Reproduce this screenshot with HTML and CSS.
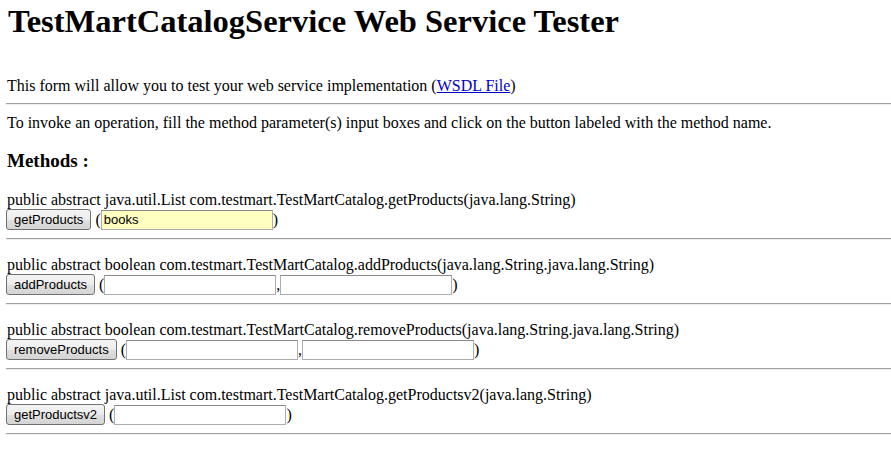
FILE: index.html
```html
<!DOCTYPE html>
<html>
<head>
<meta charset="utf-8">
<title>TestMartCatalogService Web Service Tester</title>
<link rel="stylesheet" href="styles.css">
</head>
<body>
<h1 class="title">TestMartCatalogService Web Service Tester</h1>
<p class="intro">This form will allow you to test your web service implementation (<a class="link" href="#">WSDL File</a>)</p>
<hr class="rule">
<p class="instructions">To invoke an operation, fill the method parameter(s) input boxes and click on the button labeled with the method name.</p>
<h2 class="methods-title">Methods :</h2>

<form class="method">
  <div class="sig">public abstract java.util.List com.testmart.TestMartCatalog.getProducts(java.lang.String)</div>
  <div class="call"><button type="button" class="btn">getProducts</button><span class="paren open">(</span><input class="field filled" type="text" value="books"><span class="paren">)</span></div>
</form>
<hr class="rule sep">

<form class="method">
  <div class="sig">public abstract boolean com.testmart.TestMartCatalog.addProducts(java.lang.String.java.lang.String)</div>
  <div class="call"><button type="button" class="btn">addProducts</button><span class="paren open">(</span><input class="field" type="text"><span class="comma">,</span><input class="field" type="text"><span class="paren">)</span></div>
</form>
<hr class="rule sep">

<form class="method">
  <div class="sig">public abstract boolean com.testmart.TestMartCatalog.removeProducts(java.lang.String.java.lang.String)</div>
  <div class="call"><button type="button" class="btn">removeProducts</button><span class="paren open">(</span><input class="field" type="text"><span class="comma">,</span><input class="field" type="text"><span class="paren">)</span></div>
</form>
<hr class="rule sep">

<form class="method">
  <div class="sig">public abstract java.util.List com.testmart.TestMartCatalog.getProductsv2(java.lang.String)</div>
  <div class="call"><button type="button" class="btn">getProductsv2</button><span class="paren open">(</span><input class="field" type="text"><span class="paren">)</span></div>
</form>
<hr class="rule sep">
</body>
</html>
```

FILE: styles.css
```css
html, body {
  margin: 0;
  padding: 0;
  background: #ffffff;
}
body {
  padding: 0 0 0 6px;
  font-family: "Liberation Serif", "Times New Roman", serif;
  font-size: 16px;
  line-height: 18px;
  color: #000000;
}
.title {
  margin: 0;
  padding-top: 3px;
  font-size: 32.5px;
  line-height: 36px;
  font-weight: bold;
  padding-left: 2px;
}
.intro {
  margin: 38px 0 0 1px;
}
.link {
  color: #0000cc;
  text-decoration: underline;
}
.rule {
  height: 0;
  margin: 8px 0 0 0;
  border: 0;
  border-top: 1px solid #a0a0a0;
  border-bottom: 1px solid #eeeeee;
}
.instructions {
  margin: 9px 0 0 1px;
}
.methods-title {
  margin: 18px 0 0 1px;
  font-size: 19px;
  line-height: 22px;
  font-weight: bold;
}
.method {
  margin: 16px 0 0 0;
}
.methods-title + .method {
  margin-top: 19px;
}
.sig {
  padding-left: 1px;
}
.call {
  display: flex;
  align-items: center;
  height: 21px;
}
.btn {
  height: 21px;
  margin: 0;
  padding: 0 7px;
  font-family: "Liberation Sans", Arial, sans-serif;
  font-size: 13px;
  color: #000000;
  border: 1px solid #707070;
  border-radius: 3px;
  background: linear-gradient(#f4f4f4, #ececec 50%, #e0e0e0 51%, #d4d4d4);
}
.paren, .comma {
  font-size: 16px;
}
.open {
  margin-left: 4px;
}
.field {
  box-sizing: border-box;
  width: 172px;
  height: 20px;
  margin: 0;
  padding: 0 2px;
  font-family: "Liberation Sans", Arial, sans-serif;
  font-size: 13px;
  border: 1px solid #abadb3;
  border-top-color: #8a8a8a;
  background: #ffffff;
  outline: none;
}
.filled {
  background: #ffffc0;
}
.sep {
  margin-top: 8px;
}
```
